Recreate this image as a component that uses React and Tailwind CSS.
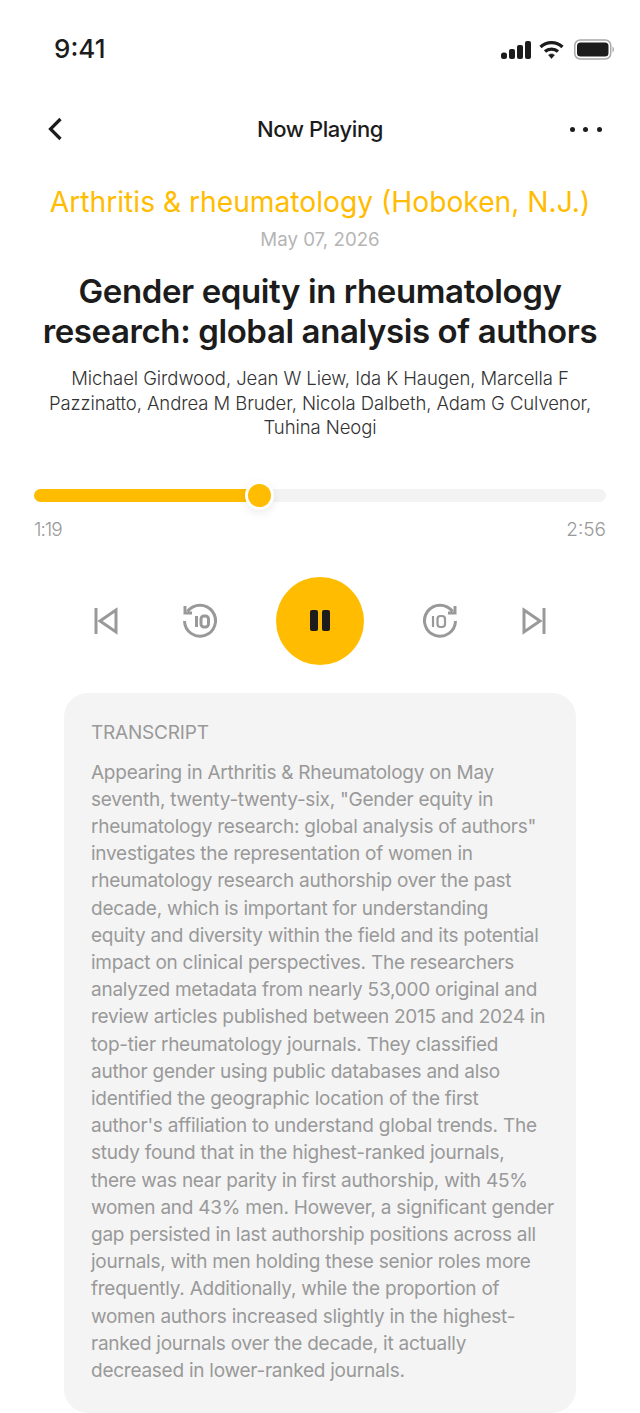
const sans = { fontFamily: 'Inter, "Liberation Sans", sans-serif' };

const authors = [
  'Michael Girdwood, Jean W Liew, Ida K Haugen, Marcella F',
  'Pazzinatto, Andrea M Bruder, Nicola Dalbeth, Adam G Culvenor,',
  'Tuhina Neogi',
];

const transcript = [
  'Appearing in Arthritis & Rheumatology on May',
  'seventh, twenty-twenty-six, "Gender equity in',
  'rheumatology research: global analysis of authors"',
  'investigates the representation of women in',
  'rheumatology research authorship over the past',
  'decade, which is important for understanding',
  'equity and diversity within the field and its potential',
  'impact on clinical perspectives. The researchers',
  'analyzed metadata from nearly 53,000 original and',
  'review articles published between 2015 and 2024 in',
  'top-tier rheumatology journals. They classified',
  'author gender using public databases and also',
  'identified the geographic location of the first',
  "author's affiliation to understand global trends. The",
  'study found that in the highest-ranked journals,',
  'there was near parity in first authorship, with 45%',
  'women and 43% men. However, a significant gender',
  'gap persisted in last authorship positions across all',
  'journals, with men holding these senior roles more',
  'frequently. Additionally, while the proportion of',
  'women authors increased slightly in the highest-',
  'ranked journals over the decade, it actually',
  'decreased in lower-ranked journals.',
];

function StatusIcons() {
  return (
    <div className="flex items-center">
      <svg width="30" height="20" viewBox="0 0 30 20" fill="#1c1c1c">
        <rect x="0" y="12.5" width="6" height="6.5" rx="2.5" />
        <rect x="8" y="9" width="6" height="10" rx="2" />
        <rect x="16" y="5" width="6" height="14" rx="2" />
        <rect x="24" y="1" width="6" height="18" rx="2" />
      </svg>
      <svg width="27" height="20" viewBox="0 0 26 20" fill="none" stroke="#1c1c1c" strokeWidth="3.2" className="ml-[7px]">
        <path d="M2 7 C8 1.2 18 1.2 24 7" />
        <path d="M6.5 11.5 C10 8.3 16 8.3 19.5 11.5" />
        <path d="M10 15 L13 18.5 L16 15 C14.5 13.6 11.5 13.6 10 15Z" fill="#1c1c1c" strokeWidth="0.5" />
      </svg>
      <svg width="40" height="21" viewBox="0 0 40 21" className="ml-[9px]">
        <rect x="0.75" y="1" width="36" height="19" rx="5.5" fill="none" stroke="#a8a8a8" strokeWidth="1.5" />
        <rect x="3" y="3.5" width="31.5" height="14" rx="3.5" fill="#1c1c1c" />
        <path d="M38.5 7.5 C39.500 8 40 9.500 40 10.500 C40 11.500 39.500 13 38.500 13.500Z" fill="#a8a8a8" />
      </svg>
    </div>
  );
}

function Rewind10({ flip }) {
  return (
    <svg width="40" height="40" viewBox="0 0 40 40" fill="none" stroke="#999999" strokeWidth="3">
      {flip ? (
        <>
          <path d="M32.500 10.500 A15.500 15.500 0 1 0 35.500 20" />
          <path d="M35 5 V12 H28" />
          <path d="M13 15 V26" strokeWidth="2.200" />
          <rect x="17.500" y="15" width="7.500" height="11" rx="3" strokeWidth="2.200" />
        </>
      ) : (
        <>
          <path d="M7.500 10.500 A15.500 15.500 0 1 1 4.500 20" />
          <path d="M5 5 V12 H12" />
          <path d="M16.500 15 V26" />
          <rect x="21" y="15" width="7.500" height="11" rx="3" />
        </>
      )}
    </svg>
  );
}

export default function App() {
  return (
    <div className="bg-white w-[640px] h-[1413px] overflow-hidden text-[#1c1c1c] flex flex-col" style={sans}>
      {/* status bar */}
      <div className="h-[98px] pt-[33px] pl-[54px] pr-[26px] flex items-start justify-between">
        <span className="text-[26px] leading-[32px] font-medium">9:41</span>
        <div className="pt-[6px]"><StatusIcons /></div>
      </div>

      {/* nav */}
      <div className="h-[62px] px-[38px] flex items-center justify-between">
        <svg width="32" height="32" viewBox="0 0 32 32" fill="none" stroke="#1c1c1c" strokeWidth="3.2">
          <path d="M22.5 6 L12.5 16 L22.5 26" />
        </svg>
        <span className="text-[22px] font-medium tracking-[-0.4px]">Now Playing</span>
        <div className="w-[32px] flex justify-between">
          <span className="size-[5px] rounded-full bg-[#1c1c1c]" />
          <span className="size-[5px] rounded-full bg-[#1c1c1c]" />
          <span className="size-[5px] rounded-full bg-[#1c1c1c]" />
        </div>
      </div>

      {/* article */}
      <div className="text-center">
        <div className="mt-[24px] text-[28.2px] leading-[36px] text-[#ffbc00] whitespace-nowrap">
          Arthritis &amp; rheumatology (Hoboken, N.J.)
        </div>
        <div className="mt-[8px] text-[18.7px] leading-[24px] text-[#b5b5b5]">May 07, 2026</div>
        <h1 className="mt-[19px] text-[33px] leading-[40px] font-semibold tracking-[-0.4px]">
          <div>Gender equity in rheumatology</div>
          <div className="whitespace-nowrap">research: global analysis of authors</div>
        </h1>
        <div className="mt-[15px] text-[18.5px] leading-[24.5px] font-light text-[#333333] tracking-[-0.08px]">
          {authors.map((a) => <div key={a} className="whitespace-nowrap">{a}</div>)}
        </div>
      </div>

      {/* progress */}
      <div className="mt-[49px] mx-[34px] h-[13px] rounded-full bg-[#f3f3f3] relative">
        <div className="h-full w-[226px] rounded-full bg-[#ffbc00]" />
        <div className="absolute left-[211px] top-[-8px] size-[29px] rounded-full bg-[#ffbc00] border-[3px] border-white shadow-[0_3px_10px_rgba(0,0,0,0.08)]" />
      </div>
      <div className="mt-[16px] mx-[34px] flex justify-between text-[19px] leading-[24px] font-light text-[#999999]">
        <span className="tracking-[-1px]">1:19</span>
        <span>2:56</span>
      </div>

      {/* controls */}
      <div className="mt-[35px] h-[88px] flex items-center justify-center">
        <svg width="24" height="28" viewBox="0 0 24 28" fill="none" stroke="#999999" strokeWidth="3">
          <path d="M2 1 V27" />
          <path d="M22 3 L6 14 L22 25 Z" />
        </svg>
        <div className="ml-[62px]"><Rewind10 /></div>
        <div className="mx-[56px] size-[88px] rounded-full bg-[#ffbc00] flex items-center justify-center gap-[4px]">
          <span className="w-[8px] h-[21px] rounded-[2px] bg-[#1c1c1c]" />
          <span className="w-[8px] h-[21px] rounded-[2px] bg-[#1c1c1c]" />
        </div>
        <Rewind10 flip />
        <svg width="24" height="28" viewBox="0 0 24 28" fill="none" stroke="#999999" strokeWidth="3" className="ml-[62px]">
          <path d="M22 1 V27" />
          <path d="M2 3 L18 14 L2 25 Z" />
        </svg>
      </div>

      {/* transcript */}
      <div className="mt-[28px] mx-[64px] flex-1 rounded-[24px] bg-[#f4f4f4] pl-[27px] pt-[27px] text-[#999999] text-[19px]">
        <div className="leading-[26px] tracking-[-0.2px]">TRANSCRIPT</div>
        <div className="mt-[13px] leading-[27.2px] tracking-[-0.25px]">
          {transcript.map((l) => <div key={l} className="whitespace-nowrap">{l}</div>)}
        </div>
      </div>
    </div>
  );
}
